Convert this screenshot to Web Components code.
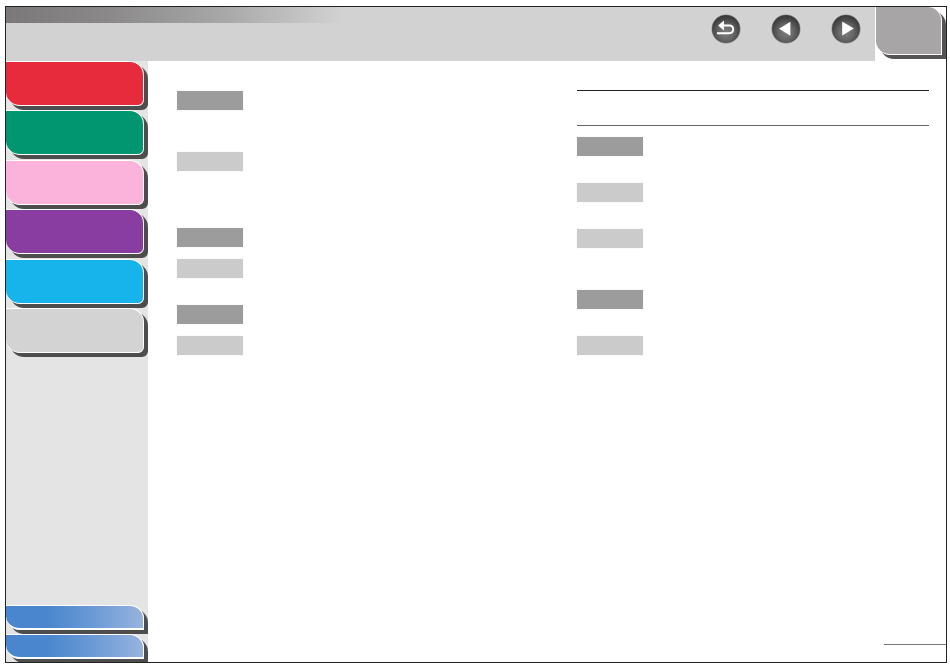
<!DOCTYPE html>
<html lang="en"><head><meta charset="utf-8"><title>Manual page</title>
<style>html,body{margin:0;padding:0;background:#fff;font-family:"Liberation Sans",sans-serif}</style></head>
<body>
<doc-frame>
  <top-bar slot="top">
    <round-btn kind="back"></round-btn><round-btn kind="prev"></round-btn><round-btn kind="next"></round-btn>
  </top-bar>
  <page-tab slot="top"></page-tab>
  <side-nav slot="side">
    <nav-tab color="#e72a3c"></nav-tab>
    <nav-tab color="#019670"></nav-tab>
    <nav-tab color="#fbb3dc"></nav-tab>
    <nav-tab color="#8a3da0"></nav-tab>
    <nav-tab color="#16b4ea"></nav-tab>
    <nav-tab color="#d3d3d3"></nav-tab>
    <nav-tab slot="bottom" mini></nav-tab>
    <nav-tab slot="bottom" mini></nav-tab>
  </side-nav>
  <page-main slot="main">
    <section-col slot="left">
      <label-block tone="dark" style="margin-top:30px"></label-block>
      <label-block tone="light" style="margin-top:42px"></label-block>
      <label-block tone="dark" style="margin-top:57px"></label-block>
      <label-block tone="light" style="margin-top:12px"></label-block>
      <label-block tone="dark" style="margin-top:27px"></label-block>
      <label-block tone="light" style="margin-top:12px"></label-block>
    </section-col>
    <section-col slot="right">
      <rule-line style="margin-top:29px;background:#222"></rule-line>
      <rule-line style="margin-top:34px;background:#666"></rule-line>
      <label-block tone="dark" style="margin-top:11px"></label-block>
      <label-block tone="light" style="margin-top:27px"></label-block>
      <label-block tone="light" style="margin-top:27px"></label-block>
      <label-block tone="dark" style="margin-top:42px"></label-block>
      <label-block tone="light" style="margin-top:27px"></label-block>
    </section-col>
  </page-main>
</doc-frame>
<script>
function def(name, css, html, init){
  customElements.define(name, class extends HTMLElement{
    constructor(){super();this.attachShadow({mode:"open"}).innerHTML="<style>"+css+"</style>"+html;}
    connectedCallback(){ if(init) init(this); }
  });
}
def("doc-frame",`
  :host{display:grid;grid-template-columns:142px 1fr;grid-template-rows:54px 1fr;box-sizing:border-box;
    width:942px;height:657px;margin:6px 0 0 5px;border:1px solid #222;background:#fff;overflow:hidden}
  .top{grid-column:1/3;display:flex}
`,`<div class="top"><slot name="top"></slot></div><slot name="side"></slot><slot name="main"></slot>`);
def("top-bar",`
  :host{display:flex;box-sizing:border-box;width:869px;height:54px;position:relative;background:#d2d2d2;
    justify-content:flex-end;gap:32px;padding:7.5px 15.5px 0 0}
  .strip{position:absolute;left:0;top:0;width:336px;height:16px;background:linear-gradient(90deg,#7a7878,#8a8888 30%,#a8a8a8 65%,#d2d2d2)}
`,`<div class="strip"></div><slot></slot>`);
const icons={
 back:'<path d="M5 18.2h12c2.6 0 4.2-1.7 4.2-3.9s-1.6-3.8-4.2-3.8h-6" stroke="#fff" stroke-width="1.9" fill="none"/><path d="M12 5.6v9.8l-6-4.9z" fill="#fff"/>',
 prev:'<path d="M18.4 6.8v14l-11.4-7z" fill="#fff"/>',
 next:'<path d="M10.2 6.6v14l11.6-7z" fill="#fff"/>'};
def("round-btn",`
  :host{display:block;width:28px;height:28px;position:relative;z-index:1;border-radius:50%;
    background:radial-gradient(circle at 50% 62%,#7e7e7e 0,#666 35%,#444 62%,#2c2c2c 90%,#3c3c3c 100%);
    box-shadow:0 0 0 .5px #8c8c8c}
  svg{display:block}
`,`<svg width="28" height="28" viewBox="0 0 28 28" aria-hidden="true"></svg>`,
  el=>{el.shadowRoot.querySelector("svg").innerHTML=icons[el.getAttribute("kind")];});
def("page-tab",`
  :host{display:block;box-sizing:border-box;width:65.5px;height:48px;margin-left:1px;background:#a7a5a6;
    border:solid #fff;border-width:0 1px 1px 0;border-radius:0 14px 0 14px;box-shadow:4px 4px 0 #555}
`,``);
def("side-nav",`
  :host{display:flex;flex-direction:column;justify-content:space-between;background:#e4e4e4;height:601px;overflow:hidden}
  .a{display:flex;flex-direction:column;gap:4.4px}
  .b{display:flex;flex-direction:column;gap:3.5px;padding-bottom:3px}
`,`<div class="a"><slot></slot></div><div class="b"><slot name="bottom"></slot></div>`);
def("nav-tab",`
  :host{display:block;box-sizing:border-box;width:138px;height:45px;background:var(--c);
    border:1px solid #fff;border-left:0;border-radius:0 14px 6px 14px;box-shadow:4px 4px 0 #4d4d4d}
  :host([mini]){height:25.5px;background:linear-gradient(90deg,#4a86cd,#4a86cd 30%,#6c9bd6 65%,#97b3de);
    width:137.5px;border-width:1px 1px 2px 0;border-radius:0 14px 0 14px}
`,``,el=>{const c=el.getAttribute("color"); if(c) el.style.setProperty("--c",c);});
def("page-main",`
  :host{display:grid;grid-template-columns:400px 352px;padding-left:29px;position:relative;height:601px;box-sizing:border-box}
  .mark{position:absolute;right:0;bottom:17px;width:62px;height:1px;background:#777}
`,`<slot name="left"></slot><slot name="right"></slot><div class="mark"></div>`);
def("section-col",`:host{display:flex;flex-direction:column;align-items:flex-start}`,`<slot></slot>`);
def("label-block",`
  :host{display:block;width:66px;height:19px;flex:none;background:#cbcbcb;box-shadow:0 0 1px rgba(0,0,0,.12)}
  :host([tone=dark]){background:#9c9c9c}
`,``);
def("rule-line",`:host{display:block;width:352px;height:1px;flex:none}`,``);
</script>
</body></html>
